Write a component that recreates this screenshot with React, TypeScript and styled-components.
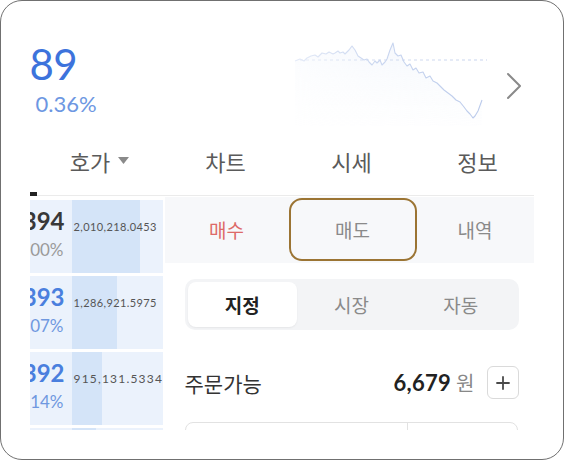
import React from "react";
import styled, { createGlobalStyle } from "styled-components";

const Global = createGlobalStyle`
  html, body { margin: 0; padding: 0; background: #ffffff; }
  * { box-sizing: border-box; }
  body { font-family: "Noto Sans CJK KR", "Noto Sans", sans-serif; }
`;

const KR = `"Noto Sans CJK KR", "Noto Sans", sans-serif`;
const NUM = `Lato, "Noto Sans", sans-serif`;

const Frame = styled.div`
  width: 564px;
  height: 460px;
  border: 1.5px solid #707070;
  border-radius: 22px;
  padding: 28.5px;
  background: #fff;
`;

const Viewport = styled.div`
  width: 504px;
  height: 400px;
  overflow: hidden;
  display: flex;
  flex-direction: column;
`;

const Header = styled.div`
  height: 105px;
  flex-shrink: 0;
  display: flex;
  align-items: flex-start;
`;

const PriceBlock = styled.div`
  width: 262px;
  padding-top: 11px;
  display: flex;
  flex-direction: column;
`;

const BigPrice = styled.div`
  font-family: ${NUM};
  font-size: 42px;
  line-height: 46px;
  color: #3d73dc;
  letter-spacing: -0.5px;
`;

const Change = styled.div`
  font-family: ${NUM};
  font-size: 22px;
  line-height: 26px;
  margin-top: 4px;
  margin-left: 6px;
  color: #6d97e2;
`;

const Chart = styled.svg`
  margin-top: 8px;
  flex-shrink: 0;
`;

const Chevron = styled.svg`
  margin-left: 16px;
  margin-top: 42px;
  flex-shrink: 0;
`;

const TabsRow = styled.div`
  height: 57px;
  flex-shrink: 0;
  padding-left: 7px;
  padding-bottom: 5px;
  display: grid;
  grid-template-columns: repeat(4, 126px);
  align-items: center;
`;

const TopTab = styled.div`
  display: flex;
  align-items: center;
  justify-content: center;
  font-family: ${KR};
  font-size: 22px;
  color: #5a5a5a;
  gap: 8px;
`;

const Rule = styled.div`
  height: 4px;
  flex-shrink: 0;
  display: flex;
  align-items: flex-end;
`;

const Indicator = styled.div`
  width: 7px;
  height: 4px;
  background: #222;
`;

const RuleLine = styled.div`
  flex: 1;
  height: 1px;
  background: #ebebeb;
`;

const Body = styled.div`
  flex: 1;
  display: grid;
  grid-template-columns: 135px 1fr;
  min-height: 0;
`;

const OrderBook = styled.div`
  overflow: hidden;
  display: flex;
  flex-direction: column;
  gap: 3px;
  padding-top: 4px;
  padding-right: 2px;
`;

const BookRow = styled.div`
  height: 73px;
  flex-shrink: 0;
  display: grid;
  grid-template-columns: 42px 1fr;
  background: #ebf2fc;
`;

const PriceCell = styled.div<{ $tone: "dark" | "blue" }>`
  display: flex;
  flex-direction: column;
  align-items: flex-end;
  padding-right: 7px;
  padding-top: 8px;
  font-family: ${NUM};
  white-space: nowrap;
  color: ${(p) => (p.$tone === "dark" ? "#383838" : "#4a7fde")};
`;

const RowPrice = styled.div`
  font-size: 24px;
  line-height: 26px;
  font-weight: 700;
`;

const RowPct = styled.div<{ $tone: "dark" | "blue" }>`
  font-size: 17px;
  line-height: 20px;
  margin-top: 6px;
  margin-right: 1px;
  color: ${(p) => (p.$tone === "dark" ? "#9a9a9a" : "#6f98e0")};
`;

const VolumeCell = styled.div<{ $bar: number; $size: number; $spacing: number }>`
  padding-top: 20px;
  padding-left: 2px;
  font-family: ${NUM};
  font-size: ${(p) => p.$size}px;
  letter-spacing: ${(p) => p.$spacing}px;
  line-height: 14px;
  color: #555;
  white-space: nowrap;
  background: linear-gradient(
    to right,
    #d4e4f8 ${(p) => p.$bar}px,
    transparent ${(p) => p.$bar}px
  );
`;

const Panel = styled.div`
  display: flex;
  flex-direction: column;
`;

const SubTabs = styled.div`
  margin-top: 1px;
  height: 66px;
  flex-shrink: 0;
  background: #f7f8fa;
  display: grid;
  grid-template-columns: 124px 128px 1fr;
`;

const SubTab = styled.div<{ $color: string; $outlined?: boolean }>`
  display: flex;
  align-items: center;
  justify-content: center;
  font-family: ${KR};
  font-size: 19px;
  color: ${(p) => p.$color};
  border: ${(p) => (p.$outlined ? "2px solid #9b7433" : "none")};
  border-radius: 13px;
  margin: ${(p) => (p.$outlined ? "1px 0 2px" : "0")};
`;

const Segment = styled.div`
  margin: 16px 15px 0 20px;
  height: 51px;
  flex-shrink: 0;
  padding: 3px;
  border-radius: 10px;
  background: #f3f4f6;
  display: grid;
  grid-template-columns: repeat(3, 1fr);
`;

const SegItem = styled.div<{ $active?: boolean }>`
  display: flex;
  align-items: center;
  justify-content: center;
  border-radius: 8px;
  font-family: ${KR};
  font-size: 19px;
  font-weight: ${(p) => (p.$active ? 700 : 400)};
  color: ${(p) => (p.$active ? "#222" : "#8a8a8a")};
  background: ${(p) => (p.$active ? "#fff" : "transparent")};
  box-shadow: ${(p) => (p.$active ? "0 1px 2px rgba(0,0,0,0.06)" : "none")};
`;

const AvailRow = styled.div`
  margin: 36px 15px 0 20px;
  height: 34px;
  flex-shrink: 0;
  display: flex;
  align-items: center;
`;

const AvailLabel = styled.div`
  font-family: ${KR};
  font-size: 21px;
  color: #333;
  flex: 1;
`;

const Amount = styled.div`
  font-family: ${NUM};
  font-size: 22px;
  font-weight: 700;
  color: #222;
  letter-spacing: 0.3px;
`;

const Unit = styled.div`
  font-family: ${KR};
  font-size: 20px;
  color: #888;
  margin-left: 5px;
`;

const PlusButton = styled.div`
  width: 32px;
  height: 33px;
  margin-left: 12px;
  border: 1.5px solid #dadada;
  border-radius: 6px;
  display: flex;
  align-items: center;
  justify-content: center;
`;

const InputBox = styled.div`
  margin: 22px 16px 0 20px;
  height: 60px;
  flex-shrink: 0;
  border: 1.5px solid #e2e2e2;
  border-radius: 8px;
  display: grid;
  grid-template-columns: 221px 1fr;
`;

const InputPart = styled.div<{ $divider?: boolean }>`
  border-left: ${(p) => (p.$divider ? "1.5px solid #e2e2e2" : "none")};
`;

const linePts: [number, number][] = [
  [3, 23], [8, 21], [12, 23], [15, 20], [19, 18], [23, 17], [26, 19], [30, 15],
  [34, 16], [37, 14], [41, 16], [43, 15], [46, 13], [48, 15], [51, 14], [53, 16],
  [57, 12], [60, 8], [63, 12], [66, 18], [69, 20], [72, 22], [75, 21], [77, 24],
  [80, 27], [83, 23], [85, 25], [88, 22], [90, 27], [93, 24], [95, 21], [98, 12],
  [101, 5], [103, 15], [106, 18], [109, 17], [112, 24], [115, 28], [118, 26],
  [121, 32], [124, 30], [127, 35], [131, 34], [134, 40], [138, 38], [141, 43],
  [145, 45], [148, 48], [152, 52], [156, 55], [160, 58], [164, 62], [168, 64],
  [172, 69], [175, 73], [178, 76], [181, 80], [183, 78], [186, 73], [190, 62],
];

const SparkChart: React.FC = () => {
  const line = linePts.map(([x, y]) => `${x},${y}`).join(" ");
  const area = `${line} 190,88 3,88`;
  return (
    <Chart width="198" height="90" viewBox="0 0 198 90">
      <defs>
        <linearGradient id="fillG" x1="0" y1="0" x2="0" y2="1">
          <stop offset="0" stopColor="#e6edf9" stopOpacity="0.6" />
          <stop offset="1" stopColor="#f2f6fc" stopOpacity="0.1" />
        </linearGradient>
        <linearGradient id="fadeG" x1="0" y1="0" x2="1" y2="0">
          <stop offset="0" stopColor="#fff" stopOpacity="0.3" />
          <stop offset="0.4" stopColor="#fff" stopOpacity="0.6" />
          <stop offset="1" stopColor="#fff" stopOpacity="0.8" />
        </linearGradient>
        <mask id="fadeM">
          <rect x="0" y="0" width="198" height="90" fill="url(#fadeG)" />
        </mask>
      </defs>
      <g mask="url(#fadeM)">
        <polygon points={area} fill="url(#fillG)" />
        <line x1="8" y1="22" x2="195" y2="22" stroke="#b9c8e8" strokeWidth="1" strokeDasharray="3 3" />
        <polyline points={line} fill="none" stroke="#a9bde6" strokeWidth="1.1" strokeLinejoin="round" />
      </g>
    </Chart>
  );
};

type Row = {
  price: string;
  pct: string;
  vol: string;
  bar: number;
  tone: "dark" | "blue";
  size: number;
  spacing: number;
};

const rows: Row[] = [
  { price: "1,394", pct: "0.00%", vol: "2,010,218.0453", bar: 68, tone: "dark", size: 11, spacing: 0.4 },
  { price: "1,393", pct: "0.07%", vol: "1,286,921.5975", bar: 45, tone: "blue", size: 11, spacing: 0.4 },
  { price: "1,392", pct: "0.14%", vol: "915,131.5334", bar: 30, tone: "blue", size: 12, spacing: 1.2 },
  { price: "1,391", pct: "0.21%", vol: "703,442.1180", bar: 24, tone: "blue", size: 12, spacing: 1.2 },
];

export default function App() {
  return (
    <>
      <Global />
      <Frame>
        <Viewport>
          <Header>
            <PriceBlock>
              <BigPrice>89</BigPrice>
              <Change>0.36%</Change>
            </PriceBlock>
            <SparkChart />
            <Chevron width="16" height="28" viewBox="0 0 16 28">
              <path d="M2 2 L14 14 L2 26" fill="none" stroke="#8a8a8a" strokeWidth="2" strokeLinecap="round" strokeLinejoin="round" />
            </Chevron>
          </Header>
          <TabsRow>
            <TopTab>
              호가
              <svg width="11" height="7" viewBox="0 0 11 7">
                <path d="M0 0 H11 L5.5 7 Z" fill="#8a8a8a" />
              </svg>
            </TopTab>
            <TopTab>차트</TopTab>
            <TopTab>시세</TopTab>
            <TopTab>정보</TopTab>
          </TabsRow>
          <Rule>
            <Indicator />
            <RuleLine />
          </Rule>
          <Body>
            <OrderBook>
              {rows.map((r) => (
                <BookRow key={r.price}>
                  <PriceCell $tone={r.tone}>
                    <RowPrice>{r.price}</RowPrice>
                    <RowPct $tone={r.tone}>{r.pct}</RowPct>
                  </PriceCell>
                  <VolumeCell $bar={r.bar} $size={r.size} $spacing={r.spacing}>
                    {r.vol}
                  </VolumeCell>
                </BookRow>
              ))}
            </OrderBook>
            <Panel>
              <SubTabs>
                <SubTab $color="#dd6a68">매수</SubTab>
                <SubTab $color="#8a8a8a" $outlined>
                  매도
                </SubTab>
                <SubTab $color="#8a8a8a">내역</SubTab>
              </SubTabs>
              <Segment>
                <SegItem $active>지정</SegItem>
                <SegItem>시장</SegItem>
                <SegItem>자동</SegItem>
              </Segment>
              <AvailRow>
                <AvailLabel>주문가능</AvailLabel>
                <Amount>6,679</Amount>
                <Unit>원</Unit>
                <PlusButton>
                  <svg width="14" height="14" viewBox="0 0 14 14">
                    <path d="M7 1 V13 M1 7 H13" stroke="#4a4a4a" strokeWidth="1.8" strokeLinecap="round" />
                  </svg>
                </PlusButton>
              </AvailRow>
              <InputBox>
                <InputPart />
                <InputPart $divider />
              </InputBox>
            </Panel>
          </Body>
        </Viewport>
      </Frame>
    </>
  );
}
